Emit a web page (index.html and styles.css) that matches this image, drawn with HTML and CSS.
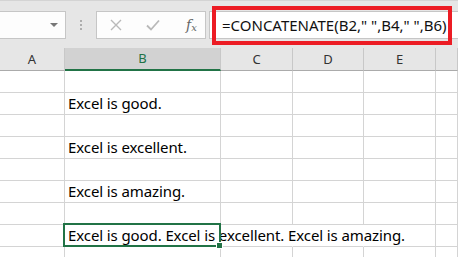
FILE: index.html
```html
<!DOCTYPE html>
<html>
<head>
  <title>CONCATENATE</title>
  <link rel="stylesheet" href="styles.css">
</head>
<body>
  <div class="toolbar">
    <div class="namebox"><span class="caret"></span></div>
    <div class="grip"><i></i><i></i><i></i></div>
    <div class="fbuttons">
      <svg class="ico" width="12" height="12" viewBox="0 0 12 12"><path d="M1 1 L11 11 M11 1 L1 11" stroke="#b9b9b9" stroke-width="1.4" fill="none"/></svg>
      <svg class="ico" width="14" height="12" viewBox="0 0 14 12"><path d="M1 6.5 L5 10.5 L13 1.5" stroke="#b9b9b9" stroke-width="1.8" fill="none"/></svg>
      <span class="fx">f<sub>x</sub></span>
    </div>
    <div class="formula">
      <span class="ftext">=CONCATENATE(B2," ",B4," ",B6)</span>
      <div class="callout"></div>
    </div>
  </div>

  <div class="sheet">
    <div class="hd">A</div>
    <div class="hd sel">B</div>
    <div class="hd">C</div>
    <div class="hd">D</div>
    <div class="hd">E</div>
    <div class="hd"></div>

    <div class="c"></div><div class="c"></div><div class="c"></div><div class="c"></div><div class="c"></div><div class="c"></div>
    <div class="c"></div><div class="c txt">Excel is good.</div><div class="c"></div><div class="c"></div><div class="c"></div><div class="c"></div>
    <div class="c"></div><div class="c"></div><div class="c"></div><div class="c"></div><div class="c"></div><div class="c"></div>
    <div class="c"></div><div class="c txt">Excel is excellent.</div><div class="c"></div><div class="c"></div><div class="c"></div><div class="c"></div>
    <div class="c"></div><div class="c"></div><div class="c"></div><div class="c"></div><div class="c"></div><div class="c"></div>
    <div class="c"></div><div class="c txt">Excel is amazing.</div><div class="c"></div><div class="c"></div><div class="c"></div><div class="c"></div>
    <div class="c"></div><div class="c"></div><div class="c"></div><div class="c"></div><div class="c"></div><div class="c"></div>
    <div class="c"></div><div class="c txt active">Excel is good. Excel is excellent. Excel is amazing.</div><div class="c spill"></div><div class="c spill"></div><div class="c"></div><div class="c"></div>
    <div class="c"></div><div class="c"></div><div class="c"></div><div class="c"></div><div class="c"></div><div class="c"></div>
  </div>
</body>
</html>
```

FILE: styles.css
```css
body {
  margin: 0;
  width: 458px;
  height: 257px;
  overflow: hidden;
  background: #ffffff;
  font-family: "Noto Sans", "Open Sans", sans-serif;
  color: #000;
}

.toolbar {
  height: 48px;
  box-sizing: border-box;
  border-top: 1px solid #d4d4d4;
  background: #e6e6e6;
  display: flex;
  align-items: flex-start;
  padding-top: 10px;
}

.namebox {
  width: 67px;
  height: 28px;
  margin-left: -1px;
  box-sizing: border-box;
  background: #fdfdfd;
  border: 1px solid #c6c6c6;
  display: flex;
  justify-content: flex-end;
  align-items: center;
  padding-right: 7px;
}

.caret {
  width: 0;
  height: 0;
  border-left: 4px solid transparent;
  border-right: 4px solid transparent;
  border-top: 4px solid #777;
}

.grip {
  width: 2px;
  margin: 9px 14px 0 14px;
  display: flex;
  flex-direction: column;
  gap: 2px;
}

.grip i {
  width: 2px;
  height: 2px;
  background: #adadad;
}

.fbuttons {
  width: 110px;
  height: 28px;
  box-sizing: border-box;
  background: #fdfdfd;
  border: 1px solid #c6c6c6;
  display: flex;
  align-items: center;
  padding-left: 13px;
  gap: 24px;
}

.fx {
  font-family: "DejaVu Serif", "Liberation Serif", serif;
  font-style: italic;
  font-size: 14px;
  color: #666;
  margin-left: 2px;
}

.fx sub {
  font-size: 10px;
  vertical-align: -1px;
}

.formula {
  position: relative;
  flex: 1;
  margin-left: 3px;
  margin-right: -2px;
  height: 28px;
  box-sizing: border-box;
  background: #fff;
  border: 1px solid #c6c6c6;
  display: flex;
  align-items: center;
  padding-left: 12px;
}

.ftext {
  font-size: 15px;
  color: #111;
  white-space: nowrap;
}

.callout {
  position: absolute;
  left: 2px;
  top: -6px;
  width: 240px;
  height: 39px;
  box-sizing: border-box;
  border: 4px solid #ec1c24;
}

.sheet {
  display: grid;
  grid-template-columns: 65px 156px 72px 71px 72px 22px;
  grid-template-rows: 23px repeat(9, 22px);
}

.hd {
  background: #e6e6e6;
  border-right: 1px solid #c8c8c8;
  border-bottom: 1px solid #ababab;
  box-sizing: border-box;
  font-size: 13px;
  color: #333;
  text-align: center;
  line-height: 22px;
}

.hd.sel {
  background: #d2d2d2;
  color: #217346;
  border-bottom: 2px solid #217346;
  line-height: 21px;
}

.c {
  border-right: 1px solid #d4d4d4;
  border-bottom: 1px solid #d4d4d4;
  box-sizing: border-box;
}

.txt {
  font-size: 15px;
  letter-spacing: -0.1px;
  line-height: 20px;
  padding-left: 3px;
  white-space: nowrap;
}

.spill {
  border-right-color: transparent;
}

.active {
  position: relative;
  overflow: visible;
}

.active::after {
  content: "";
  position: absolute;
  left: -2px;
  top: -2px;
  right: -1px;
  bottom: -1px;
  border: 2px solid #217346;
}

.active::before {
  content: "";
  position: absolute;
  right: -3px;
  bottom: -3px;
  width: 5px;
  height: 5px;
  background: #217346;
  border: 1px solid #fff;
  z-index: 1;
}
```
